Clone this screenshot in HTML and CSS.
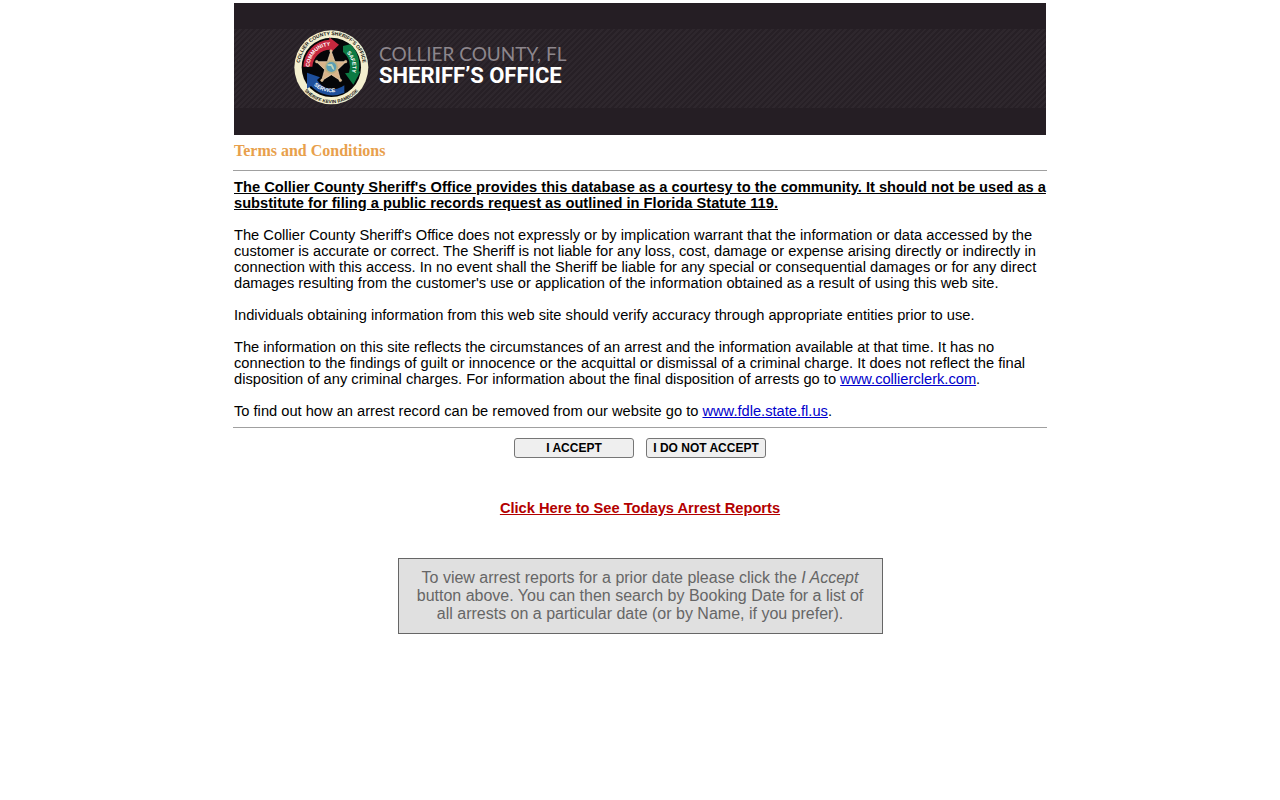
FILE: index.html
```html
<!DOCTYPE html>
<html lang="en">
<head>
<meta charset="utf-8">
<meta name="viewport" content="width=device-width, initial-scale=1">
<title>Terms and Conditions</title>
<link rel="stylesheet" href="styles.css">
</head>
<body>
<div class="page">
  <header class="banner">
    <div class="band">
      <svg class="seal" viewBox="23 18 225 225" role="img" aria-label="Collier County Sheriff's Office seal">
        <defs>
          <path id="ring-top" d="M43 152 A95 95 0 1 1 227 152"/>
          <path id="ring-bottom" d="M31 152 A106 106 0 0 0 239 152"/>
          <path id="arc-community" d="M72 146 A64 64 0 0 1 149 67"/>
          <path id="arc-safety" d="M174 80 A63 63 0 0 1 193 155"/>
          <path id="arc-service" d="M73 172 A75 75 0 0 0 161 200"/>
        </defs>
        <circle cx="135" cy="130" r="111" fill="#f3efcf"/>
        <circle cx="135" cy="130" r="89" fill="#050608"/>
        <path d="M51 128 A84 84 0 0 1 129 47 L129 40 L158 62 L132 87 L131 77 A54 54 0 0 0 78 128 Z" fill="#c5283e"/>
        <path d="M170 66 L192 61 A86 86 0 0 1 217 142 L222 143 L201 182 L176 148 L188 146 A56 56 0 0 0 170 84 Z" fill="#0c7a43"/>
        <path d="M174 206 A86 86 0 0 1 74 186 L62 194 L62 146 L101 160 L92 168 A56 56 0 0 0 174 184 Z" fill="#1d4f9c"/>
        <path d="M134 80 L146 113 L179 113 L154 137 L163 170 L135 152 L106 170 L115 137 L90 113 L123 113 Z" fill="#d8b48a" stroke="#f1ddbc" stroke-width="2"/>
        <g fill="#d8b48a" stroke="#f1ddbc">
          <circle cx="134" cy="81" r="4"/><circle cx="178" cy="113" r="4"/><circle cx="162" cy="169" r="4"/><circle cx="107" cy="169" r="4"/><circle cx="91" cy="113" r="4"/>
        </g>
        <circle cx="135" cy="129" r="20" fill="#b9b083"/>
        <circle cx="135" cy="129" r="15" fill="#5b9fb5"/>
        <path d="M123 121 L137 120 L142 130 L144 139 L138 134 L134 126 L124 125 Z" fill="#c5d9bd"/>
        <text class="ring-text"><textPath href="#ring-top" startOffset="50%">COLLIER COUNTY SHERIFF’S OFFICE</textPath></text>
        <text class="ring-text ring-text-small"><textPath href="#ring-bottom" startOffset="50%">SHERIFF KEVIN RAMBOSK</textPath></text>
        <text class="arrow-text"><textPath href="#arc-community" startOffset="50%">COMMUNITY</textPath></text>
        <text class="arrow-text"><textPath href="#arc-safety" startOffset="50%">SAFETY</textPath></text>
        <text class="arrow-text"><textPath href="#arc-service" startOffset="50%">SERVICE</textPath></text>
      </svg>
      <div class="agency">
        <span class="county">COLLIER COUNTY, FL</span>
        <span class="office">SHERIFF’S OFFICE</span>
      </div>
    </div>
  </header>
  <main>
    <h1 class="title">Terms and Conditions</h1>
    <hr class="rule">
    <div class="terms">
      <p class="notice">The Collier County Sheriff's Office provides this database as a courtesy to the community. It should not be used as a substitute for filing a public records request as outlined in Florida Statute 119.</p>
      <p>The Collier County Sheriff's Office does not expressly or by implication warrant that the information or data accessed by the customer is accurate or correct. The Sheriff is not liable for any loss, cost, damage or expense arising directly or indirectly in connection with this access. In no event shall the Sheriff be liable for any special or consequential damages or for any direct damages resulting from the customer's use or application of the information obtained as a result of using this web site.</p>
      <p>Individuals obtaining information from this web site should verify accuracy through appropriate entities prior to use.</p>
      <p>The information on this site reflects the circumstances of an arrest and the information available at that time. It has no connection to the findings of guilt or innocence or the acquittal or dismissal of a criminal charge. It does not reflect the final disposition of any criminal charges. For information about the final disposition of arrests go to <a href="#collierclerk">www.collierclerk.com</a>.</p>
      <p>To find out how an arrest record can be removed from our website go to <a href="#fdle">www.fdle.state.fl.us</a>.</p>
    </div>
    <hr class="rule">
    <div class="actions">
      <button class="choice" type="button">I ACCEPT</button>
      <button class="choice" type="button">I DO NOT ACCEPT</button>
    </div>
    <p class="today"><a href="#today">Click Here to See Todays Arrest Reports</a></p>
    <p class="hint">To view arrest reports for a prior date please click the <em>I Accept</em> button above. You can then search by Booking Date for a list of all arrests on a particular date (or by Name, if you prefer).</p>
  </main>
</div>
</body>
</html>
```
FILE: styles.css
```css
* {
  box-sizing: border-box;
}

body {
  margin: 0;
  background: #fff;
  color: #000;
  font-family: "Liberation Sans", Arial, sans-serif;
}

.page {
  max-width: 814px;
  margin: 0 auto;
  padding-top: 3px;
}

.banner {
  margin: 0 1px;
  padding: 26px 0 27px;
  background: #251e24;
}

.band {
  display: flex;
  align-items: center;
  gap: 10px;
  padding: 1px 60px 3px;
  background: repeating-linear-gradient(135deg, #2e272d 0 2px, #272026 2px 4px);
}

.seal {
  flex: none;
  width: 75px;
  height: 75px;
}

.ring-text,
.arrow-text {
  font-family: "Liberation Sans", Arial, sans-serif;
  font-weight: bold;
  text-anchor: middle;
}

.ring-text {
  font-size: 15px;
  fill: #15130f;
}

.ring-text-small {
  font-size: 14px;
}

.arrow-text {
  font-size: 16px;
  fill: #fff;
}

.agency {
  display: flex;
  flex-direction: column;
  padding-bottom: 6px;
  white-space: nowrap;
}

.county {
  color: #8d868c;
  font: 400 19px/22px Lato, sans-serif;
}

.office {
  color: #fff;
  font: 700 22px/22px Roboto, sans-serif;
}

.title {
  margin: 0 1px;
  padding: 7px 0 10px;
  color: #e8a04c;
  font: bold 16px/18px "Liberation Serif", "Times New Roman", serif;
}

.rule {
  height: 1px;
  margin: 0;
  border: 0;
  background: #a0a0a0;
}

.terms {
  padding: 8px 1px;
  font-size: 11pt;
  line-height: 16px;
}

.terms p {
  margin: 0 0 16px;
}

.terms p:last-child {
  margin-bottom: 0;
}

.terms .notice {
  font-weight: bold;
  text-decoration: underline;
}

.terms a {
  color: #0000cc;
}

.actions {
  display: flex;
  justify-content: center;
  gap: 12px;
  padding-top: 10px;
}

.choice {
  width: 120px;
  height: 20px;
  padding: 0;
  border: 1px solid #767676;
  border-radius: 3px;
  background: #efefef;
  color: #000;
  font: bold 12px/16px "Liberation Sans", Arial, sans-serif;
}

.today {
  margin: 42px 0;
  font-size: 11pt;
  font-weight: bold;
  line-height: 16px;
  text-align: center;
}

.today a {
  color: #b30000;
}

.hint {
  max-width: 485px;
  margin: 0 auto;
  padding: 10px 16px;
  border: 1px solid #666;
  background: #e0e0e0;
  color: #666;
  font-size: 16px;
  line-height: 18px;
  text-align: center;
}
```
